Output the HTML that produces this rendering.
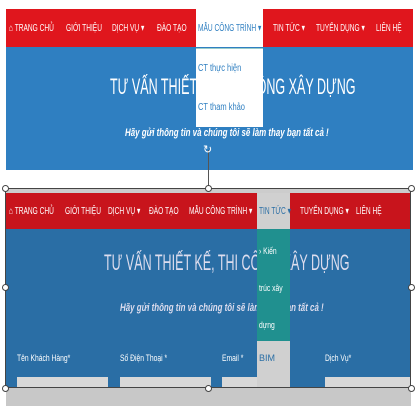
<!DOCTYPE html>
<html><head><meta charset="utf-8"><style>
*{margin:0;padding:0;box-sizing:border-box}
body{width:419px;height:419px;background:#fff;position:relative;overflow:hidden;font-family:"Liberation Sans",sans-serif}
.a{position:absolute}
.nav{color:#fff;font-size:10px;white-space:nowrap;transform:scaleX(0.66);transform-origin:0 0}
.t{color:#fff;font-size:22px;white-space:nowrap;transform:scaleX(0.57);transform-origin:0 0}
.s{color:#fff;font-size:11px;font-style:italic;font-weight:bold;white-space:nowrap;transform:scaleX(0.72);transform-origin:0 0}
.f{font-size:9px;color:#fff;white-space:nowrap;transform:scaleX(0.75);transform-origin:0 0}
.h{width:7px;height:7px;border:1px solid #444;border-radius:50%;background:#fff;z-index:5}
.z{z-index:3}
</style></head><body>
<!-- top -->
<div class="a" style="left:6px;top:9px;width:407px;height:38px;background:#e0161d"></div>
<div class="a" style="left:6px;top:47px;width:407px;height:123px;background:#2f7fc1"></div>
<div class="a nav" style="left:9px;top:23px">⌂ TRANG CHỦ</div>
<div class="a nav" style="left:66px;top:23px">GIỚI THIỆU</div>
<div class="a nav" style="left:112px;top:23px">DỊCH VỤ ▾</div>
<div class="a nav" style="left:157px;top:23px">ĐÀO TẠO</div>
<div class="a nav" style="left:273px;top:23px">TIN TỨC ▾</div>
<div class="a nav" style="left:316px;top:23px">TUYỂN DỤNG ▾</div>
<div class="a nav" style="left:376px;top:23px">LIÊN HỆ</div>
<div class="a t" style="left:110px;top:74px">TƯ VẤN THIẾT KẾ, THI CÔNG XÂY DỰNG</div>
<div class="a s" style="left:125px;top:127px">Hãy gửi thông tin và chúng tôi sẽ làm thay bạn tất cả !</div>
<div class="a z" style="left:196px;top:9px;width:67px;height:38px;background:#fff"></div>
<div class="a z" style="left:196px;top:48px;width:67px;height:79px;background:#fff;border-top:1px solid #9cc"></div>
<div class="a nav z" style="left:198px;top:23px;color:#2f7fc1;z-index:4">MẪU CÔNG TRÌNH ▾</div>
<div class="a z" style="left:198px;top:63px;font-size:10px;color:#2f7fc1;z-index:4;transform:scaleX(.75);transform-origin:0 0;white-space:nowrap">CT thực hiện</div>
<div class="a z" style="left:198px;top:102px;font-size:10px;color:#2f7fc1;z-index:4;transform:scaleX(.75);transform-origin:0 0;white-space:nowrap">CT tham khảo</div>
<div class="a" style="left:208px;top:150px;width:1px;height:38px;background:#555"></div>
<div class="a" style="left:203px;top:143px;color:#fff;font-size:11px">↻</div>
<!-- bottom -->
<div class="a" style="left:6px;top:189px;width:405px;height:5px;background:#ccc"></div>
<div class="a" style="left:6px;top:193px;width:405px;height:36px;background:#c8141c"></div>
<div class="a" style="left:6px;top:229px;width:405px;height:159px;background:#2a6ea5"></div>
<div class="a" style="left:6px;top:388px;width:405px;height:18px;background:#c8c8c8"></div>
<div class="a nav" style="left:9px;top:206px">⌂ TRANG CHỦ</div>
<div class="a nav" style="left:65px;top:206px">GIỚI THIỆU</div>
<div class="a nav" style="left:108px;top:206px">DỊCH VỤ ▾</div>
<div class="a nav" style="left:149px;top:206px">ĐÀO TẠO</div>
<div class="a nav" style="left:189px;top:206px">MẪU CÔNG TRÌNH ▾</div>
<div class="a nav" style="left:300px;top:206px">TUYỂN DỤNG ▾</div>
<div class="a nav" style="left:356px;top:206px">LIÊN HỆ</div>
<div class="a t" style="left:104px;top:250px;color:#dde">TƯ VẤN THIẾT KẾ, THI CÔNG XÂY DỰNG</div>
<div class="a s" style="left:120px;top:302px;color:#dde">Hãy gửi thông tin và chúng tôi sẽ làm thay bạn tất cả !</div>
<div class="a z" style="left:257px;top:193px;width:33px;height:36px;background:#d0d0d0"></div>
<div class="a z" style="left:257px;top:229px;width:33px;height:112px;background:#20908f"></div>
<div class="a z" style="left:257px;top:341px;width:33px;height:47px;background:#d0d0d0"></div>
<div class="a nav" style="left:259px;top:206px;color:#2a6ea5;z-index:4">TIN TỨC ▾</div>
<div class="a" style="left:259px;top:233px;font-size:9px;color:#fff;line-height:37px;z-index:4;white-space:nowrap;transform:scaleX(.75);transform-origin:0 0">› Kiến<br>trúc xây<br>dựng</div>
<div class="a" style="left:259px;top:353px;font-size:9px;color:#2a6ea5;z-index:4">BIM</div>
<div class="a f" style="left:17px;top:353px">Tên Khách Hàng*</div>
<div class="a f" style="left:120px;top:353px">Số Điện Thoại *</div>
<div class="a f" style="left:222px;top:353px">Email *</div>
<div class="a f" style="left:325px;top:353px">Dịch Vụ*</div>
<div class="a" style="left:17px;top:377px;width:91px;height:11px;background:#d8d8d8"></div>
<div class="a" style="left:120px;top:377px;width:91px;height:11px;background:#d8d8d8"></div>
<div class="a" style="left:222px;top:377px;width:35px;height:11px;background:#d8d8d8"></div>
<div class="a" style="left:325px;top:377px;width:86px;height:11px;background:#d8d8d8"></div>
<div class="a" style="left:5px;top:188px;width:406px;height:200px;border:1px solid #444;z-index:5"></div>
<div class="a h" style="left:2px;top:185px"></div>
<div class="a h" style="left:205px;top:185px"></div>
<div class="a h" style="left:408px;top:185px"></div>
<div class="a h" style="left:2px;top:284px"></div>
<div class="a h" style="left:408px;top:284px"></div>
<div class="a h" style="left:2px;top:385px"></div>
<div class="a h" style="left:205px;top:385px"></div>
<div class="a h" style="left:408px;top:385px"></div>
</body></html>
